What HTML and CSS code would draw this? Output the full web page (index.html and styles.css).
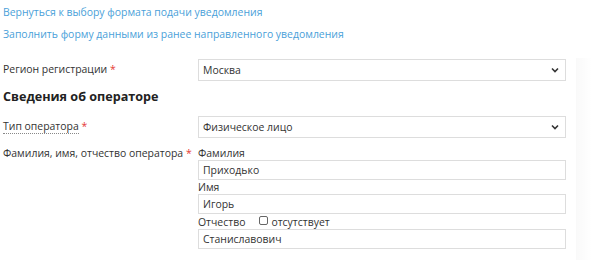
FILE: index.html
```html
<!DOCTYPE html>
<html lang="ru">
<head>
    <meta charset="UTF-8">
    <title>Уведомление оператора</title>
    <link rel="stylesheet" href="styles.css">
</head>
<body>
    <div class="page">
        <div class="links">
            <a href="#" class="link">Вернуться к выбору формата подачи уведомления</a>
            <a href="#" class="link">Заполнить форму данными из ранее направленного уведомления</a>
        </div>

        <div class="row region-row">
            <label class="row-label">Регион регистрации <span class="req">*</span></label>
            <div class="row-field">
                <div class="select">
                    <span>Москва</span>
                    <svg class="chevron" width="8" height="6" viewBox="0 0 8 6"><path d="M1 1.5 L4 4.5 L7 1.5" fill="none" stroke="#333" stroke-width="1.6"/></svg>
                </div>
            </div>
        </div>

        <h2 class="section-title">Сведения об операторе</h2>

        <div class="row type-row">
            <label class="row-label"><span class="hint">Тип оператора</span> <span class="req">*</span></label>
            <div class="row-field">
                <div class="select">
                    <span>Физическое лицо</span>
                    <svg class="chevron" width="8" height="6" viewBox="0 0 8 6"><path d="M1 1.5 L4 4.5 L7 1.5" fill="none" stroke="#333" stroke-width="1.6"/></svg>
                </div>
            </div>
        </div>

        <div class="row fio-row">
            <label class="row-label">Фамилия, имя, отчество оператора <span class="req">*</span></label>
            <div class="row-field">
                <div class="sub-label">Фамилия</div>
                <div class="input">Приходько</div>
                <div class="sub-label">Имя</div>
                <div class="input">Игорь</div>
                <div class="sub-label tall">Отчество <span class="check"><span class="box"></span>отсутствует</span></div>
                <div class="input">Станиславович</div>
            </div>
        </div>
    </div>
    <div class="side-shadow"></div>
</body>
</html>
```

FILE: styles.css
```css
* {
    margin: 0;
    padding: 0;
    box-sizing: border-box;
}

body {
    font-family: 'Open Sans', 'Liberation Sans', sans-serif;
    font-size: 10.45px;
    color: #333;
    background: #fff;
    overflow: hidden;
}

.page {
    padding: 3px 26px 0 3px;
}

.links {
    display: flex;
    flex-direction: column;
    gap: 6px;
    padding-top: 1px;
}

.link {
    color: #4a9fd9;
    text-decoration: none;
    line-height: 16px;
}

.row {
    display: flex;
}

.row-label {
    width: 195px;
    flex-shrink: 0;
    line-height: 20px;
}

.row-field {
    flex: 1;
}

.req {
    color: #e53935;
}

.hint {
    border-bottom: 1px dotted #888;
}

.region-row {
    margin-top: 17px;
}

.select {
    height: 22px;
    border: 1px solid #ddd;
    display: flex;
    align-items: center;
    justify-content: space-between;
    padding: 0 6px 0 4px;
}

.section-title {
    font-size: 12.6px;
    font-weight: 700;
    color: #222;
    line-height: 18px;
    margin-top: 7px;
}

.type-row {
    margin-top: 10px;
}

.fio-row {
    margin-top: 8px;
}

.fio-row .row-label {
    line-height: 14px;
}

.sub-label {
    height: 14px;
    line-height: 14px;
    display: flex;
    align-items: center;
    gap: 14px;
}

.sub-label.tall {
    height: 15px;
}

.input {
    height: 20px;
    border: 1px solid #ddd;
    line-height: 18px;
    padding: 0 4px;
}

.check {
    display: flex;
    align-items: center;
    gap: 3px;
}

.box {
    width: 9px;
    height: 9px;
    border: 1px solid #666;
    border-radius: 2px;
    margin-top: -2px;
}

.side-shadow {
    position: absolute;
    top: 58px;
    right: 0;
    width: 16px;
    bottom: 0;
    background: linear-gradient(90deg, rgba(0,0,0,0.025), rgba(0,0,0,0));
}
```
